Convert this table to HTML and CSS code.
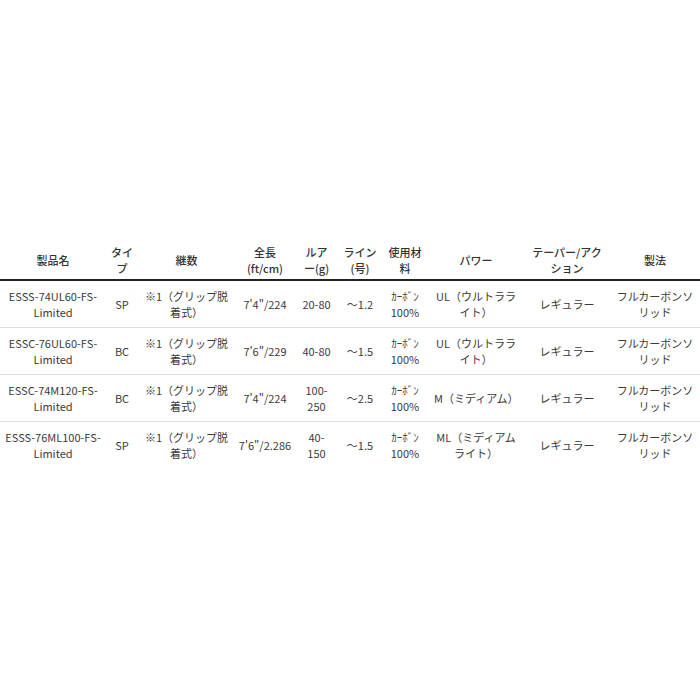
FILE: index.html
```html
<!DOCTYPE html>
<html lang="ja">
<head>
<meta charset="utf-8">
<link rel="stylesheet" href="styles.css">
</head>
<body>
<div class="page">
<table class="spec">
  <colgroup>
    <col class="c1"><col class="c2"><col class="c3"><col class="c4"><col class="c5">
    <col class="c6"><col class="c7"><col class="c8"><col class="c9"><col class="c10">
  </colgroup>
  <thead>
    <tr>
      <th>製品名</th><th>タイプ</th><th>継数</th><th>全長<br>(ft/cm)</th><th>ルア<br>ー(g)</th>
      <th>ライン<br>(号)</th><th>使用材料</th><th>パワー</th><th>テーパー/アクション</th><th>製法</th>
    </tr>
  </thead>
  <tbody>
    <tr>
      <td>ESSS-74UL60-FS-Limited</td><td>SP</td><td>※1（グリップ脱着式）</td><td>7'4"/224</td><td>20-80</td>
      <td>～1.2</td><td>ｶｰﾎﾞﾝ<br>100%</td><td class="pw">UL（ウルトラライト）</td><td>レギュラー</td><td>フルカーボンソリッド</td>
    </tr>
    <tr>
      <td>ESSC-76UL60-FS-Limited</td><td>BC</td><td>※1（グリップ脱着式）</td><td>7'6"/229</td><td>40-80</td>
      <td>～1.5</td><td>ｶｰﾎﾞﾝ<br>100%</td><td class="pw">UL（ウルトラライト）</td><td>レギュラー</td><td>フルカーボンソリッド</td>
    </tr>
    <tr>
      <td>ESSC-74M120-FS-Limited</td><td>BC</td><td>※1（グリップ脱着式）</td><td>7'4"/224</td><td>100-<br>250</td>
      <td>～2.5</td><td>ｶｰﾎﾞﾝ<br>100%</td><td class="pw">M（ミディアム）</td><td>レギュラー</td><td>フルカーボンソリッド</td>
    </tr>
    <tr>
      <td>ESSS-76ML100-FS-Limited</td><td>SP</td><td>※1（グリップ脱着式）</td><td>7'6"/2.286</td><td>40-<br>150</td>
      <td>～1.5</td><td>ｶｰﾎﾞﾝ<br>100%</td><td class="pw">ML（ミディアムライト）</td><td>レギュラー</td><td>フルカーボンソリッド</td>
    </tr>
  </tbody>
</table>
</div>
</body>
</html>
```
FILE: styles.css
```css
html, body {
  margin: 0;
  padding: 0;
  background: #fff;
}
.page {
  height: 700px;
  box-sizing: border-box;
  padding-top: 240px;
}
.spec {
  width: 700px;
  border-collapse: collapse;
  table-layout: fixed;
  font-family: "Noto Sans CJK JP", "Noto Sans", sans-serif;
  font-size: 11px;
  color: #3a3a3a;
}
.c1 { width: 106px; }
.c2 { width: 32px; }
.c3 { width: 97px; }
.c4 { width: 60px; }
.c5 { width: 43px; }
.c6 { width: 44px; }
.c7 { width: 46px; }
.c8 { width: 96px; }
.c9 { width: 86px; }
.c10 { width: 90px; }
.spec th {
  font-weight: 500;
  color: #333;
  line-height: 16px;
  padding: 4px 3px 3px;
  text-align: center;
  vertical-align: middle;
  border-bottom: 2px solid #222;
}
.spec td {
  line-height: 16px;
  padding: 7px 3px;
  text-align: center;
  vertical-align: middle;
  border-bottom: 1px solid #ddd;
}
.spec td.pw {
  padding-left: 6px;
  padding-right: 6px;
}
.spec tbody tr:last-child td {
  border-bottom: none;
}
```
